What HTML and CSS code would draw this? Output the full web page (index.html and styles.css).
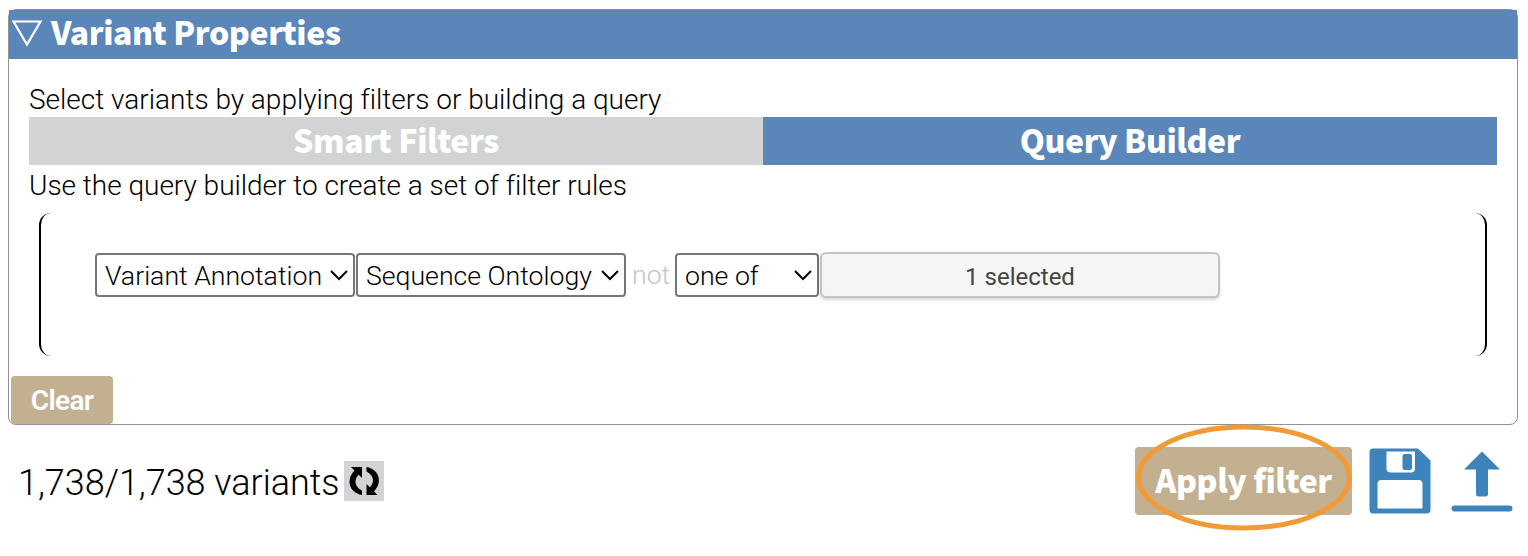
FILE: index.html
```html
<!DOCTYPE html>
<html lang="en">
<head>
<meta charset="utf-8">
<title>Variant Properties</title>
<link rel="stylesheet" href="styles.css">
</head>
<body>
<section class="card">
  <header class="card-header">
    <svg class="toggle" width="32" height="30" viewBox="0 0 32 30"><path d="M2.500 3.500H29.500L16 26.500Z" fill="none" stroke="#fff" stroke-width="2.200"/></svg>
    <h1 class="title"><span>Variant Properties</span></h1>
  </header>
  <div class="content">
    <p class="intro"><span>Select variants by applying filters or building a query</span></p>
    <div class="tabs">
      <div class="tab"><span>Smart Filters</span></div>
      <div class="tab active"><span>Query Builder</span></div>
    </div>
    <p class="hint"><span>Use the query builder to create a set of filter rules</span></p>
    <div class="group">
      <div class="select annotation"><span>Variant Annotation</span><svg class="chevron" width="18" height="12" viewBox="0 0 18 12"><path d="M1 2L9 10L17 2"/></svg></div>
      <div class="select ontology"><span>Sequence Ontology</span><svg class="chevron" width="18" height="12" viewBox="0 0 18 12"><path d="M1 2L9 10L17 2"/></svg></div>
      <span class="not">not</span>
      <div class="select operator"><span>one of</span><svg class="chevron" width="18" height="12" viewBox="0 0 18 12"><path d="M1 2L9 10L17 2"/></svg></div>
      <div class="picked"><span>1 selected</span></div>
    </div>
  </div>
  <div class="clear"><span>Clear</span></div>
</section>
<footer class="footer">
  <span class="count">1,738/1,738 variants</span>
  <div class="refresh">
    <svg width="40" height="40" viewBox="0 0 40 40"><path d="M7 6H18V17L14.700 13.700C10 18 10 25.500 18 29.500V34C4.500 31.500 2 18 10.500 9.500Z"/><path d="M33.500 34H22.500V23L25.800 26.300C30.500 22 30.500 14.500 22.500 10.500V6C36 8.500 38.500 22 30 30.500Z"/></svg>
  </div>
  <div class="apply"><span>Apply filter</span>
    <svg class="ring" width="218" height="108" viewBox="0 0 218 108"><ellipse cx="109" cy="53.500" rx="105.500" ry="50.500"/></svg>
  </div>
  <svg class="save" width="62" height="66" viewBox="0 0 62 66"><path d="M4 .5H49L61.500 12.500V61.500Q61.500 65.500 57.500 65.500H4Q.5 65.500 .5 61.500V4Q.5 .5 4 .5Z" fill="#3c84bb"/><path d="M17.500 3.500H46V20.500Q46 24.500 42 24.500H22Q17.500 24.500 17.500 20.500Z" fill="#fff"/><rect x="33.500" y="6" width="9.500" height="16" rx="2" fill="#3c84bb"/><path d="M8.500 60.500V36Q8.500 32 12.500 32H49.500Q53.500 32 53.500 36V60.500Z" fill="#fff"/></svg>
  <svg class="upload" width="62" height="62" viewBox="0 0 62 62" fill="#3c84bb"><path d="M31 1.500L49 19.500H37V44Q37 46.500 34.500 46.500H27.500Q25 46.500 25 44V19.500H13Z"/><rect x=".5" y="55.500" width="61" height="6" rx="3"/></svg>
</footer>
</body>
</html>
```
FILE: styles.css
```css
* { box-sizing: border-box; }
body {
  margin: 0;
  min-height: 556px;
  padding: 9px 10px 0 8px;
  background: #fff;
  color: #000;
  font: 300 28px/34px Roboto, sans-serif;
}
p, h1 { margin: 0; font: inherit; }
svg { display: block; flex: none; }
.card {
  height: 416px;
  border: 1px solid #919191;
  border-radius: 8px;
}
.card-header {
  display: flex;
  height: 49px;
  padding: 8px 0 0 2px;
  background: #5a86b9;
  color: #fff;
}
.title, .tab, .apply {
  font-family: "Noto Sans CJK SC", "Open Sans", sans-serif;
  font-size: 32px;
  font-weight: 900;
  letter-spacing: -.43px;
  color: #fff;
  white-space: nowrap;
}
.title { margin: -2px 0 0 8px; line-height: 30px; }
.content { padding: 24px 20px 0; }
.intro { height: 34px; letter-spacing: -.01px; }
.tabs { display: grid; grid-template-columns: 1fr 1fr; height: 48px; }
.tab {
  height: 48px;
  background: #d1d3d5;
  line-height: 45px;
  text-align: center;
}
.tab.active { background: #5a86b9; }
.hint { height: 48px; line-height: 41px; letter-spacing: -.02px; }
.group {
  display: flex;
  height: 143px;
  margin: 0 10px;
  padding: 39px 0 0 54px;
  border: 0 solid #000;
  border-width: 0 2px;
  border-radius: 12px;
}
.select {
  display: flex;
  align-items: center;
  justify-content: space-between;
  height: 44px;
  margin: 1px 1px 0 0;
  padding: 0 5px 0 8px;
  border: 2px solid #767676;
  border-radius: 4px;
  font-size: 26.67px;
  line-height: 36px;
  white-space: nowrap;
}
.select span { padding-top: 1px; }
.annotation { width: 260px; }
.ontology { width: 270px; }
.operator { width: 144px; }
.chevron { fill: none; stroke: #000; stroke-width: 2; }
.not { width: 48px; padding-left: 5px; font-size: 26.67px; line-height: 46px; color: #c4c4c4; }
.picked {
  width: 400px;
  height: 46px;
  border: 2px solid #c4c4c4;
  border-radius: 6px;
  background: #f5f5f5;
  box-shadow: 0 2px 3px rgba(0, 0, 0, .16);
  color: #444;
  font-size: 24px;
  font-weight: 400;
  line-height: 46px;
  text-align: center;
}
.clear {
  width: 102px;
  height: 48px;
  margin: 20px 0 0 2px;
  border-radius: 4px;
  background: #c2b091;
  color: #fff;
  font-size: 28px;
  font-weight: 600;
  letter-spacing: -.7px;
  line-height: 50px;
  text-align: center;
}
.footer { display: flex; padding: 22px 5px 0 10px; }
.count { width: 326px; padding-top: 14px; font-size: 36px; line-height: 44px; letter-spacing: -.03px; white-space: nowrap; }
.refresh { width: 40px; height: 40px; margin-top: 14px; background: #d1d3d5; }
.apply {
  position: relative;
  width: 217px;
  height: 68px;
  margin-left: auto;
  border-radius: 4px;
  background: #c2b091;
  line-height: 65px;
  text-align: center;
}
.ring { position: absolute; left: 0; top: -23px; fill: none; stroke: #f19a38; stroke-width: 5; }
.save { margin: 1px 0 0 17px; }
.upload { margin: 3px 0 0 20px; }
```
